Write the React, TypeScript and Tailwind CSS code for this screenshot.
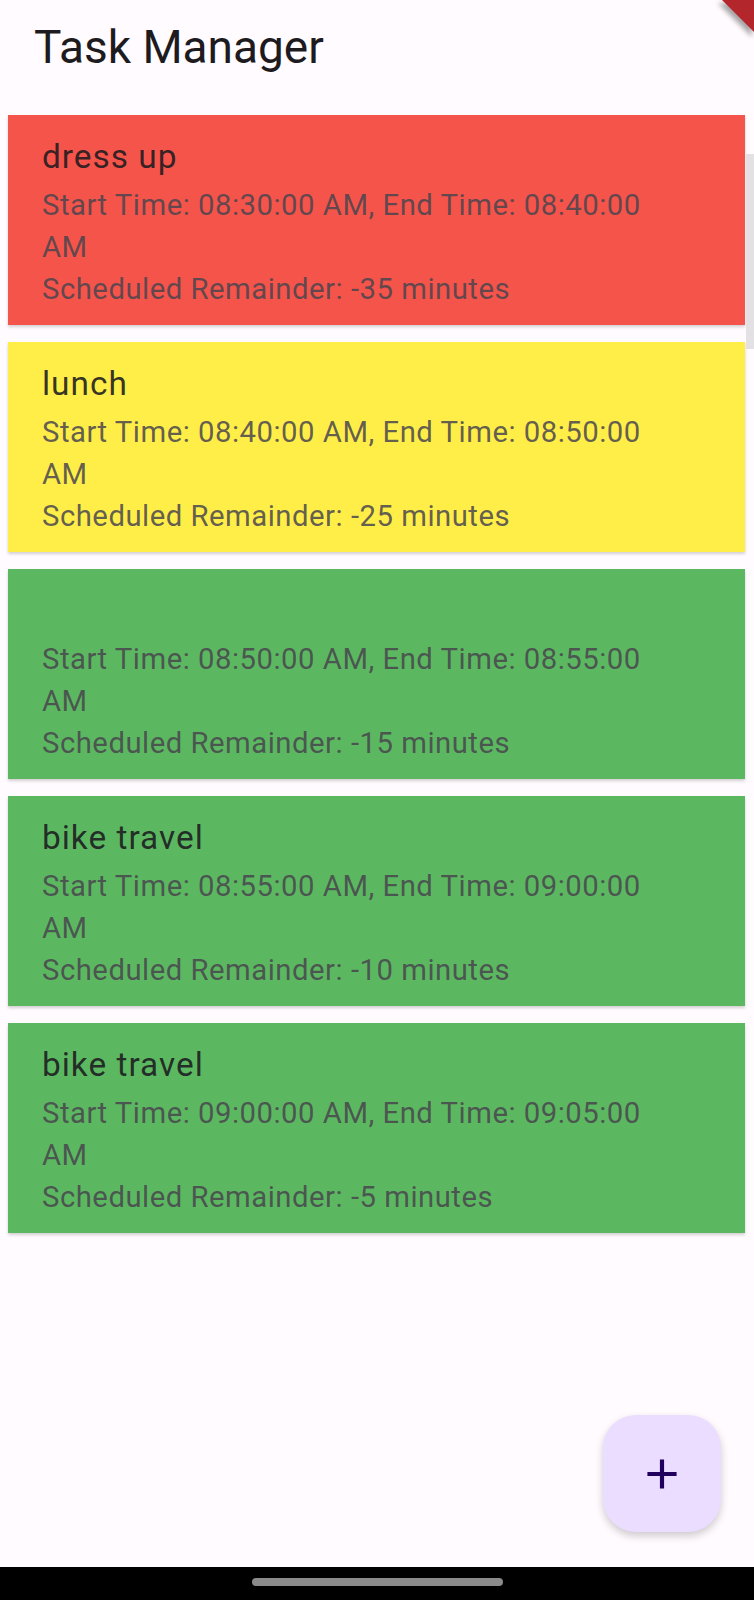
import React from "react";

type Task = {
  title: string;
  start: string;
  end: string;
  remainder: number;
  color: string;
};

const tasks: Task[] = [
  { title: "dress up", start: "08:30:00 AM", end: "08:40:00 AM", remainder: -35, color: "bg-[#F5544A]" },
  { title: "lunch", start: "08:40:00 AM", end: "08:50:00 AM", remainder: -25, color: "bg-[#FFEE48]" },
  { title: "", start: "08:50:00 AM", end: "08:55:00 AM", remainder: -15, color: "bg-[#5CB860]" },
  { title: "bike travel", start: "08:55:00 AM", end: "09:00:00 AM", remainder: -10, color: "bg-[#5CB860]" },
  { title: "bike travel", start: "09:00:00 AM", end: "09:05:00 AM", remainder: -5, color: "bg-[#5CB860]" },
];

function TaskCard({ task }: { task: Task }) {
  const [endClock, endPeriod] = task.end.split(" ");
  return (
    <div className={`h-[210px] w-full pl-[34px] pt-[17px] shadow-[0_2px_3px_rgba(0,0,0,0.18)] ${task.color}`}>
      <div className="h-[50px] text-[33.4px] leading-[50px] tracking-[1px] text-[#1D1B20]/90">
        {task.title}
      </div>
      <div className="w-[625px] pt-[2px] text-[29.3px] leading-[42px] tracking-[0.5px] text-[#49454F]/85">
        <p>
          <span>Start Time: {task.start}, End Time: {endClock}</span> <span>{endPeriod}</span>
        </p>
        <p>Scheduled Remainder: {task.remainder} minutes</p>
      </div>
    </div>
  );
}

export default function App() {
  return (
    <main
      className="relative w-[754px] h-[1600px] flex flex-col overflow-hidden bg-[#FFFBFE]"
      style={{ fontFamily: "Roboto, 'Noto Sans', sans-serif" }}
    >
      {/* app bar */}
      <header className="h-[107px] pl-[34px] pt-[24px]">
        <h1 className="text-[46px] leading-[46px] text-[#1D1B20]">Task Manager</h1>
      </header>

      {/* task list */}
      <section className="flex flex-col gap-[17px] pl-[8px] pr-[9px] pt-[8px]">
        {tasks.map((t, i) => (
          <TaskCard key={i} task={t} />
        ))}
      </section>

      {/* scrollbar thumb */}
      <div className="absolute right-0 top-[154px] w-[8px] h-[195px] bg-[#E4E1E4]" />

      {/* debug banner corner */}
      <svg className="absolute top-0 right-0" width="44" height="44" viewBox="0 0 44 44">
        <defs>
          <filter id="bshadow" x="-50%" y="-50%" width="200%" height="200%">
            <feGaussianBlur stdDeviation="2.5" />
          </filter>
        </defs>
        <polygon points="10,0 44,0 44,34" fill="rgba(0,0,0,0.35)" filter="url(#bshadow)" transform="translate(-2,3)" />
        <polygon points="12,0 44,0 44,32" fill="#B3262C" />
      </svg>

      {/* floating action button */}
      <button className="absolute right-[33px] bottom-[68px] w-[118px] h-[117px] rounded-[33px] bg-[#EADDFF] flex items-center justify-center shadow-[0_4px_8px_rgba(0,0,0,0.2)]">
        <svg width="50" height="50" viewBox="0 0 24 24">
          <path d="M19 13h-6v6h-2v-6H5v-2h6V5h2v6h6v2z" fill="#21005D" />
        </svg>
      </button>

      {/* system nav bar */}
      <footer className="mt-auto h-[33px] bg-black flex justify-center pt-[11px]">
        <div className="w-[251px] h-[8px] rounded-full bg-[#8A8A8A]" />
      </footer>
    </main>
  );
}
